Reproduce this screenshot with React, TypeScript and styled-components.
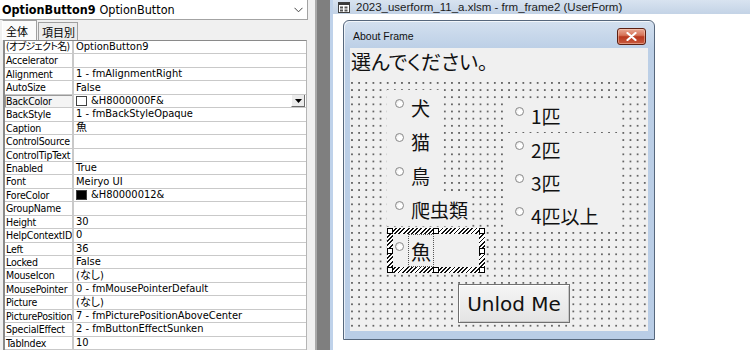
import React from 'react';
import styled, { createGlobalStyle } from 'styled-components';

const jp = '"Noto Sans CJK JP", "Noto Sans", sans-serif';
const latin = '"Liberation Sans", "Noto Sans CJK JP", sans-serif';
const gridFont = '"Liberation Sans Narrow", "DejaVu Sans Condensed", "Noto Sans CJK JP", sans-serif';

const GlobalStyle = createGlobalStyle`
  html, body { margin: 0; padding: 0; background: #ffffff; }
  body { width: 750px; height: 350px; overflow: hidden; }
  * { box-sizing: border-box; }
`;

const Screen = styled.div`
  display: flex;
  width: 750px;
  height: 350px;
  overflow: hidden;
`;

// --- Properties window ---

const PropsPanel = styled.div`
  flex: 0 0 317px;
  display: flex;
  flex-direction: column;
  background: #f0f0f0;
  padding-right: 7px;
  border-right: 2px solid #a9a9a9;
  font-family: ${gridFont};
  font-size: 11px;
  color: #000;
  overflow: hidden;
  font-feature-settings: 'palt';
`;

const ObjectCombo = styled.div`
  height: 20px;
  flex: 0 0 20px;
  display: flex;
  align-items: center;
  gap: 4px;
  padding: 0 4px 0 2px;
  background: #ffffff;
  border: 1px solid #a3a3a3;
  border-top: none;
  border-left: none;
  font-size: 12.5px;
`;

const ObjectName = styled.span`
  font-weight: 700;
`;

const ComboChevron = styled.svg`
  margin-left: auto;
`;

const TabStrip = styled.div`
  display: flex;
  align-items: flex-end;
  height: 20px;
  flex: 0 0 20px;
  padding-left: 2px;
  font-family: ${jp};
`;

const Tab = styled.div<{ $active?: boolean }>`
  width: ${({ $active }) => ($active ? '35px' : '40px')};
  height: ${({ $active }) => ($active ? '20px' : '18px')};
  padding-left: 3px;
  display: flex;
  align-items: center;
  white-space: nowrap;
  font-size: 11px;
  background: ${({ $active }) => ($active ? '#fbfbfb' : '#ececec')};
  border: 1px solid #a0a0a0;
  border-bottom: none;
  border-left-color: ${({ $active }) => ($active ? '#ffffff' : '#a0a0a0')};
  margin-right: ${({ $active }) => ($active ? '1px' : '0')};
`;

const PropGrid = styled.div`
  flex: 1;
  margin-left: 3px;
  margin-right: 1px;
  background: #ffffff;
  border-top: 1px solid #8a8a8a;
  border-left: 2px solid #8a8a8a;
  border-right: 1px solid #b5b5b5;
  overflow: hidden;
`;

const PropRow = styled.div`
  display: grid;
  grid-template-columns: 69px 1fr;
  height: 13.45px;
  border-bottom: 1px solid #c9c9c9;
  line-height: 12px;
`;

const NameCell = styled.div<{ $selected?: boolean; $tight?: boolean }>`
  padding-left: 1px;
  border-right: 2px solid #c9c9c9;
  font-size: ${({ $tight }) => ($tight ? '10px' : '10.5px')};
  letter-spacing: ${({ $tight }) => ($tight ? '-0.7px' : '-0.2px')};
  white-space: nowrap;
  overflow: hidden;
  ${({ $selected }) =>
    $selected &&
    `
    background: #f4f4f4;
    box-shadow: inset 1px 1px 0 #9a9a9a;
  `}
`;

const ValueCell = styled.div`
  display: flex;
  align-items: center;
  gap: 4px;
  padding-left: 2px;
  white-space: nowrap;
  overflow: hidden;
`;

const Swatch = styled.span<{ $color: string }>`
  width: 11px;
  height: 10px;
  flex: 0 0 11px;
  background: ${({ $color }) => $color};
  border: 1px solid #404040;
`;

const DropButton = styled.span`
  margin-left: auto;
  margin-right: 1px;
  width: 14px;
  height: 13px;
  display: flex;
  align-items: center;
  justify-content: center;
  background: #ececec;
  border: 1px solid #ffffff;
  border-right-color: #6d6d6d;
  border-bottom-color: #6d6d6d;
`;

// --- Workspace ---

const Workspace = styled.div`
  flex: 1;
  display: flex;
  background: #7f7f7f;
  padding-left: 13px;
`;

const ChildWindow = styled.div`
  flex: 1;
  display: flex;
  flex-direction: column;
  background: #ffffff;
  border-left: 3px solid #bfd2ea;
`;

const ChildTitle = styled.div`
  height: 14px;
  flex: 0 0 14px;
  display: flex;
  align-items: center;
  gap: 6px;
  padding-left: 5px;
  background: linear-gradient(180deg, #d8e3f0 0%, #c3d3e6 100%);
  font-family: ${latin};
  font-size: 11.5px;
  color: #1b1b1b;
`;

const Designer = styled.div`
  flex: 1;
  padding: 6px 0 0 10px;
  background: #ffffff;
`;

const FormWindow = styled.div`
  width: 312px;
  height: 320px;
  display: flex;
  flex-direction: column;
  padding: 0 6px 8px 6px;
  border: 1px solid #56677c;
  border-radius: 6px 6px 0 0;
  background: linear-gradient(180deg, #d3e0ef 0px, #bccfe6 28px, #b9cde6 100%);
  box-shadow: inset 1px 1px 0 rgba(255, 255, 255, 0.7);
`;

const FormTitle = styled.div`
  height: 27px;
  flex: 0 0 27px;
  display: flex;
  align-items: center;
  justify-content: space-between;
  padding: 3px 2px 0 3px;
  font-family: ${latin};
  font-size: 10.5px;
  color: #111;
`;

const CloseButton = styled.div`
  width: 29px;
  height: 17px;
  display: flex;
  align-items: center;
  justify-content: center;
  border: 1px solid #5c2012;
  border-radius: 3px;
  background: linear-gradient(180deg, #e9a995 0%, #d67459 42%, #b9391f 52%, #c85a3e 100%);
  box-shadow: inset 0 0 0 1px rgba(255, 220, 200, 0.45);
`;

const Client = styled.div`
  position: relative;
  flex: 1;
  background-color: #f0f0f0;
  background-image: radial-gradient(circle, #666666 0 0.65px, transparent 0.95px);
  background-size: 7.15px 7.15px;
  background-position: -1.6px 2.8px;
  font-family: ${jp};
  color: #111;
  overflow: hidden;
`;

// controls placed by their Left/Top on the form canvas
const Placed = styled.div<{ $x: number; $y: number; $w: number; $h: number }>`
  position: absolute;
  left: ${({ $x }) => $x}px;
  top: ${({ $y }) => $y}px;
  width: ${({ $w }) => $w}px;
  height: ${({ $h }) => $h}px;
`;

const Label = styled(Placed)`
  background: #f0f0f0;
  padding-left: 1px;
  font-size: 20px;
  line-height: 28px;
  font-feature-settings: 'palt';
`;

const OptionButton = styled(Placed)`
  display: flex;
  align-items: center;
  gap: 7px;
  padding-left: 8px;
  background: #f0f0f0;
  font-size: 19px;
  line-height: 1;
  white-space: nowrap;
  font-feature-settings: 'palt';
`;

const Radio = styled.span`
  width: 9px;
  height: 9px;
  flex: 0 0 9px;
  margin-bottom: 8px;
  border-radius: 50%;
  border: 1px solid #8b8b8b;
  background: radial-gradient(circle at 60% 60%, #ffffff 0 35%, #d9d9d9 100%);
`;

const Selection = styled(Placed)`
  padding: 6px;
  background: repeating-linear-gradient(135deg, #111 0 1.3px, #ffffff 1.3px 3px);
`;

const SelectionInner = styled.div`
  height: 100%;
  display: flex;
  align-items: center;
  gap: 4px;
  padding-left: 2px;
  background: #f0f0f0;
  font-size: 20px;
  line-height: 1;
`;

const FocusCaption = styled.span`
  height: 33px;
  display: flex;
  align-items: center;
  padding: 3px 2px 0 2px;
  border: 1px dotted #555;
`;

const Handle = styled.span<{ $h: 'l' | 'c' | 'r'; $v: 't' | 'm' | 'b' }>`
  position: absolute;
  width: 6px;
  height: 6px;
  background: #ffffff;
  border: 1px solid #000;
  left: ${({ $h }) => ($h === 'l' ? '0' : $h === 'c' ? 'calc(50% - 3px)' : 'calc(100% - 6px)')};
  top: ${({ $v }) => ($v === 't' ? '0' : $v === 'm' ? 'calc(50% - 3px)' : 'calc(100% - 6px)')};
`;

const CommandButton = styled(Placed)`
  display: flex;
  align-items: center;
  justify-content: center;
  padding-top: 1px;
  background: linear-gradient(180deg, #f5f5f5 0%, #e4e4e4 100%);
  border: 1px solid #707070;
  box-shadow: inset 1px 1px 0 #ffffff, inset -1px -1px 0 #c9c9c9;
  font-family: 'DejaVu Sans', sans-serif;
  font-size: 20px;
  color: #111;
`;

type Prop = {
  name: string;
  value: string;
  swatch?: string;
  dropdown?: boolean;
  tight?: boolean;
};

const properties: Prop[] = [
  { name: '(オブジェクト名)', value: 'OptionButton9', tight: true },
  { name: 'Accelerator', value: '' },
  { name: 'Alignment', value: '1 - fmAlignmentRight' },
  { name: 'AutoSize', value: 'False' },
  { name: 'BackColor', value: '&H8000000F&', swatch: '#ffffff', dropdown: true },
  { name: 'BackStyle', value: '1 - fmBackStyleOpaque' },
  { name: 'Caption', value: '魚' },
  { name: 'ControlSource', value: '' },
  { name: 'ControlTipText', value: '' },
  { name: 'Enabled', value: 'True' },
  { name: 'Font', value: 'Meiryo UI' },
  { name: 'ForeColor', value: '&H80000012&', swatch: '#000000' },
  { name: 'GroupName', value: '' },
  { name: 'Height', value: '30' },
  { name: 'HelpContextID', value: '0' },
  { name: 'Left', value: '36' },
  { name: 'Locked', value: 'False' },
  { name: 'MouseIcon', value: '(なし)' },
  { name: 'MousePointer', value: '0 - fmMousePointerDefault' },
  { name: 'Picture', value: '(なし)' },
  { name: 'PicturePosition', value: '7 - fmPicturePositionAboveCenter' },
  { name: 'SpecialEffect', value: '2 - fmButtonEffectSunken' },
  { name: 'TabIndex', value: '10' },
];

const animals = [
  { text: '犬', y: 42, w: 56 },
  { text: '猫', y: 76, w: 56 },
  { text: '鳥', y: 110, w: 56 },
  { text: '爬虫類', y: 144, w: 82 },
];

const counts = [
  { text: '1匹', y: 51 },
  { text: '2匹', y: 85 },
  { text: '3匹', y: 118 },
  { text: '4匹以上', y: 151 },
];

const handles: Array<['l' | 'c' | 'r', 't' | 'm' | 'b']> = [
  ['l', 't'], ['c', 't'], ['r', 't'],
  ['l', 'm'], ['r', 'm'],
  ['l', 'b'], ['c', 'b'], ['r', 'b'],
];

const FormIcon = () => (
  <svg width="12" height="11" viewBox="0 0 12 11">
    <rect x="0.5" y="0.5" width="11" height="10" fill="#ffffff" stroke="#404040" />
    <rect x="1" y="1" width="10" height="2" fill="#3a3a3a" />
    <rect x="2" y="4.5" width="3" height="2" fill="#555" />
    <rect x="6.5" y="4.5" width="3" height="2" fill="#555" />
    <rect x="2" y="7.5" width="3" height="2" fill="#555" />
    <rect x="6.5" y="7.5" width="3" height="2" fill="#555" />
  </svg>
);

const App: React.FC = () => {
  return (
    <>
      <GlobalStyle />
      <Screen>
        <PropsPanel>
          <ObjectCombo>
            <ObjectName>OptionButton9</ObjectName>
            <span>OptionButton</span>
            <ComboChevron width="9" height="6" viewBox="0 0 9 6">
              <path d="M0.5 0.8 L4.5 4.8 L8.5 0.8" fill="none" stroke="#444" strokeWidth="1" />
            </ComboChevron>
          </ObjectCombo>
          <TabStrip>
            <Tab $active>全体</Tab>
            <Tab>項目別</Tab>
          </TabStrip>
          <PropGrid>
            {properties.map((p) => (
              <PropRow key={p.name}>
                <NameCell $selected={p.dropdown} $tight={p.tight}>
                  {p.name}
                </NameCell>
                <ValueCell>
                  {p.swatch && <Swatch $color={p.swatch} />}
                  <span>{p.value}</span>
                  {p.dropdown && (
                    <DropButton>
                      <svg width="7" height="4" viewBox="0 0 7 4">
                        <path d="M0 0 H7 L3.5 4 Z" fill="#000" />
                      </svg>
                    </DropButton>
                  )}
                </ValueCell>
              </PropRow>
            ))}
          </PropGrid>
        </PropsPanel>

        <Workspace>
          <ChildWindow>
            <ChildTitle>
              <FormIcon />
              <span>2023_userform_11_a.xlsm - frm_frame2 (UserForm)</span>
            </ChildTitle>
            <Designer>
              <FormWindow>
                <FormTitle>
                  <span>About Frame</span>
                  <CloseButton>
                    <svg width="11" height="9" viewBox="0 0 11 9">
                      <path
                        d="M1.5 1 L9.5 8 M9.5 1 L1.5 8"
                        stroke="#ffffff"
                        strokeWidth="2.2"
                        strokeLinecap="round"
                      />
                    </svg>
                  </CloseButton>
                </FormTitle>
                <Client>
                  <Label $x={0} $y={0} $w={298} $h={34}>
                    選んでください。
                  </Label>

                  {animals.map((a) => (
                    <OptionButton key={a.text} $x={37} $y={a.y} $w={a.w} $h={34}>
                      <Radio />
                      <span>{a.text}</span>
                    </OptionButton>
                  ))}

                  {counts.map((c) => (
                    <OptionButton key={c.text} $x={157} $y={c.y} $w={111} $h={33}>
                      <Radio />
                      <span>{c.text}</span>
                    </OptionButton>
                  ))}

                  <Selection $x={37} $y={180} $w={98} $h={45}>
                    <SelectionInner>
                      <Radio />
                      <FocusCaption>魚</FocusCaption>
                    </SelectionInner>
                    {handles.map(([h, v]) => (
                      <Handle key={h + v} $h={h} $v={v} />
                    ))}
                  </Selection>

                  <CommandButton $x={108} $y={236} $w={112} $h={39}>
                    Unlod Me
                  </CommandButton>
                </Client>
              </FormWindow>
            </Designer>
          </ChildWindow>
        </Workspace>
      </Screen>
    </>
  );
};

export default App;
